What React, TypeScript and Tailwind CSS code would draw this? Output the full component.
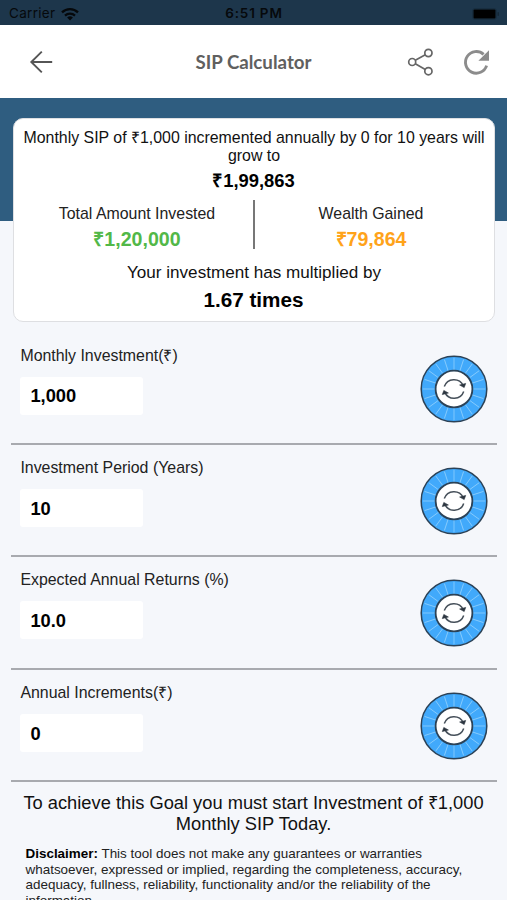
interface InputRowProps {
  label: string;
  value: string;
}

const DialIcon = () => (
  <svg width="68" height="68" viewBox="0 0 68 68" fill="none">
    <circle cx="34" cy="34" r="32.8" fill="#41a9fb" stroke="#2b4257" strokeWidth="1.5" />
    {Array.from({ length: 20 }, (_, i) => (
      <line key={i} x1="34" y1="3" x2="34" y2="15" stroke="#86cbfd" strokeWidth="0.9" transform={`rotate(${i * 18} 34 34)`} />
    ))}
    <circle cx="34" cy="34" r="18.4" fill="#fff" stroke="#2b4257" strokeWidth="1.8" />
    <g stroke="#46505a" strokeWidth="1.5">
      <path d="M24.3 31.6A10.2 10.2 0 0 1 43.2 30.6" />
      <path d="M43.7 36.4A10.2 10.2 0 0 1 24.8 37.4" />
    </g>
    <path d="M39.6 30L45.7 28.4L44.2 32.6Z" fill="#2c3540" stroke="#2c3540" strokeWidth="0.6" />
    <path d="M28.4 38L23.8 35.4L22.3 39.6Z" fill="#2c3540" stroke="#2c3540" strokeWidth="0.6" />
  </svg>
);

const InputRow = ({ label, value }: InputRowProps) => (
  <div className="mr-[10px] ml-[11px] flex h-[112.45px] justify-between border-b-2 border-[#a8aaaf] pr-[9.5px] pl-[9.4px]">
    <div className="pt-[12px]">
      <div className="h-[22px] text-[15.9px] leading-[22px] text-[#222]">{label}</div>
      <div className="mt-[10px] flex h-[38px] w-[122.5px] items-center rounded-[3px] bg-white pt-[1px] pl-[10px] text-[18.3px] font-bold">
        {value}
      </div>
    </div>
    <div className="pt-[22px]">
      <DialIcon />
    </div>
  </div>
);

const rows: InputRowProps[] = [
  { label: "Monthly Investment(₹)", value: "1,000" },
  { label: "Investment Period (Years)", value: "10" },
  { label: "Expected Annual Returns (%)", value: "10.0" },
  { label: "Annual Increments(₹)", value: "0" },
];

const StatusBar = () => (
  <div className="grid h-[25px] shrink-0 grid-cols-3 items-center bg-[#1d364b] pt-[3px] pr-[7px] pl-[9px] font-['Inter',sans-serif] text-[13.5px] leading-none text-[#06090c]">
    <div className="flex items-center gap-[6px]">
      <span className="tracking-[0.3px]">Carrier</span>
      <svg width="18" height="13" viewBox="0 0 18 13" fill="none" stroke="#05080b">
        <path d="M1 4.4A11.5 11.5 0 0 1 17 4.4" strokeWidth="2.3" />
        <path d="M4 7.6A7.2 7.2 0 0 1 14 7.6" strokeWidth="2.2" />
        <path d="M9 12.6L6.1 9.6A4.1 4.1 0 0 1 11.9 9.6Z" fill="#05080b" stroke="none" />
      </svg>
    </div>
    <span className="pr-[1px] text-center font-semibold tracking-[0.8px]">6:51 PM</span>
    <svg className="justify-self-end" width="28" height="12" viewBox="0 0 28 12">
      <rect x="0.5" y="0.5" width="24" height="11" rx="2.5" fill="none" stroke="#182e40" />
      <rect x="1.5" y="1.5" width="22" height="9" rx="1" fill="#000" />
      <rect x="25.5" y="4" width="1.4" height="4" rx="0.7" fill="#142737" />
    </svg>
  </div>
);

const Header = () => (
  <div className="flex h-[73px] shrink-0 items-center bg-white pr-[17px] pl-[24px]">
    <svg width="34" height="26" viewBox="0 0 34 26" fill="none" stroke="#555" strokeWidth="1.9">
      <path d="M17.8 2.6L7.3 13L17.8 23.4M7.3 13H28.2" />
    </svg>
    <h1 className="flex-1 pt-[1px] pl-[43px] text-center font-['Lato',sans-serif] text-[18.7px] font-bold text-[#606060]">
      SIP Calculator
    </h1>
    <svg className="mr-[28px]" width="28" height="28" viewBox="0 0 28 28" fill="none" stroke="#666" strokeWidth="1.7">
      <circle cx="6.2" cy="14" r="3.5" />
      <circle cx="22.4" cy="5" r="3.6" />
      <circle cx="22.4" cy="23.2" r="3.6" />
      <path d="M9.3 12.2L19.3 6.8M9.3 15.8L19.3 21.4" />
    </svg>
    <svg width="28" height="28" viewBox="0 0 28 28" fill="none">
      <path d="M24.6 17.6A10.8 10.8 0 1 1 21.6 6.4" stroke="#8c8c8c" strokeWidth="2.9" />
      <path d="M27 2.2V12.8H16.4Z" fill="#8c8c8c" />
    </svg>
  </div>
);

export default function App() {
  return (
    <div className="flex h-[900px] w-[507px] flex-col overflow-hidden bg-[#f5f7fb] font-['Liberation_Sans',sans-serif] text-black">
      <StatusBar />
      <Header />
      <div className="shrink-0 bg-[linear-gradient(#2f5d80_123px,transparent_123px)] pt-[20px] pr-[12px] pl-[13px]">
        <div className="h-[204px] rounded-[10px] border border-[#dedfe2] bg-white text-center">
          <p className="pt-[10px] text-[15.9px] leading-[18px] text-[#111]">
            Monthly SIP of ₹1,000 incremented annually by 0 for 10 years will
            <br />
            grow to
          </p>
          <p className="mt-[5px] pr-[1px] text-[18.4px] leading-[22px] font-bold">₹1,99,863</p>
          <div className="mt-[8px] flex h-[49px]">
            <div className="flex-1 pl-[7px]">
              <p className="pt-[3px] text-[15.9px] leading-[22px] text-[#222]">Total Amount Invested</p>
              <p className="pt-[2px] text-[19.6px] leading-[24px] font-bold text-[#52b848]">₹1,20,000</p>
            </div>
            <div className="w-[2px] bg-[#777]" />
            <div className="flex-1 pr-[7px]">
              <p className="pt-[3px] text-[15.9px] leading-[22px] text-[#222]">Wealth Gained</p>
              <p className="pt-[2px] text-[19.6px] leading-[24px] font-bold text-[#ffa31a]">₹79,864</p>
            </div>
          </div>
          <p className="mt-[13px] text-[17.1px] leading-[22px] text-[#111]">Your investment has multiplied by</p>
          <p className="mt-[4px] pr-[1px] text-[20.7px] leading-[24px] font-bold">1.67 times</p>
        </div>
      </div>
      <div className="mt-[10.5px] shrink-0">
        {rows.map((row) => (
          <InputRow key={row.label} {...row} />
        ))}
      </div>
      <p className="mt-[9.8px] shrink-0 text-center text-[18.3px] leading-[21px] text-[#111]">
        To achieve this Goal you must start Investment of ₹1,000
        <br />
        Monthly SIP Today.
      </p>
      <p className="mt-[12px] ml-[25.5px] shrink-0 text-[13.45px] leading-[15.6px] whitespace-nowrap text-[#222]">
        <b className="text-black">Disclaimer:</b> This tool does not make any guarantees or warranties
        <br />
        whatsoever, expressed or implied, regarding the completeness, accuracy,
        <br />
        adequacy, fullness, reliability, functionality and/or the reliability of the
        <br />
        information.
      </p>
    </div>
  );
}
